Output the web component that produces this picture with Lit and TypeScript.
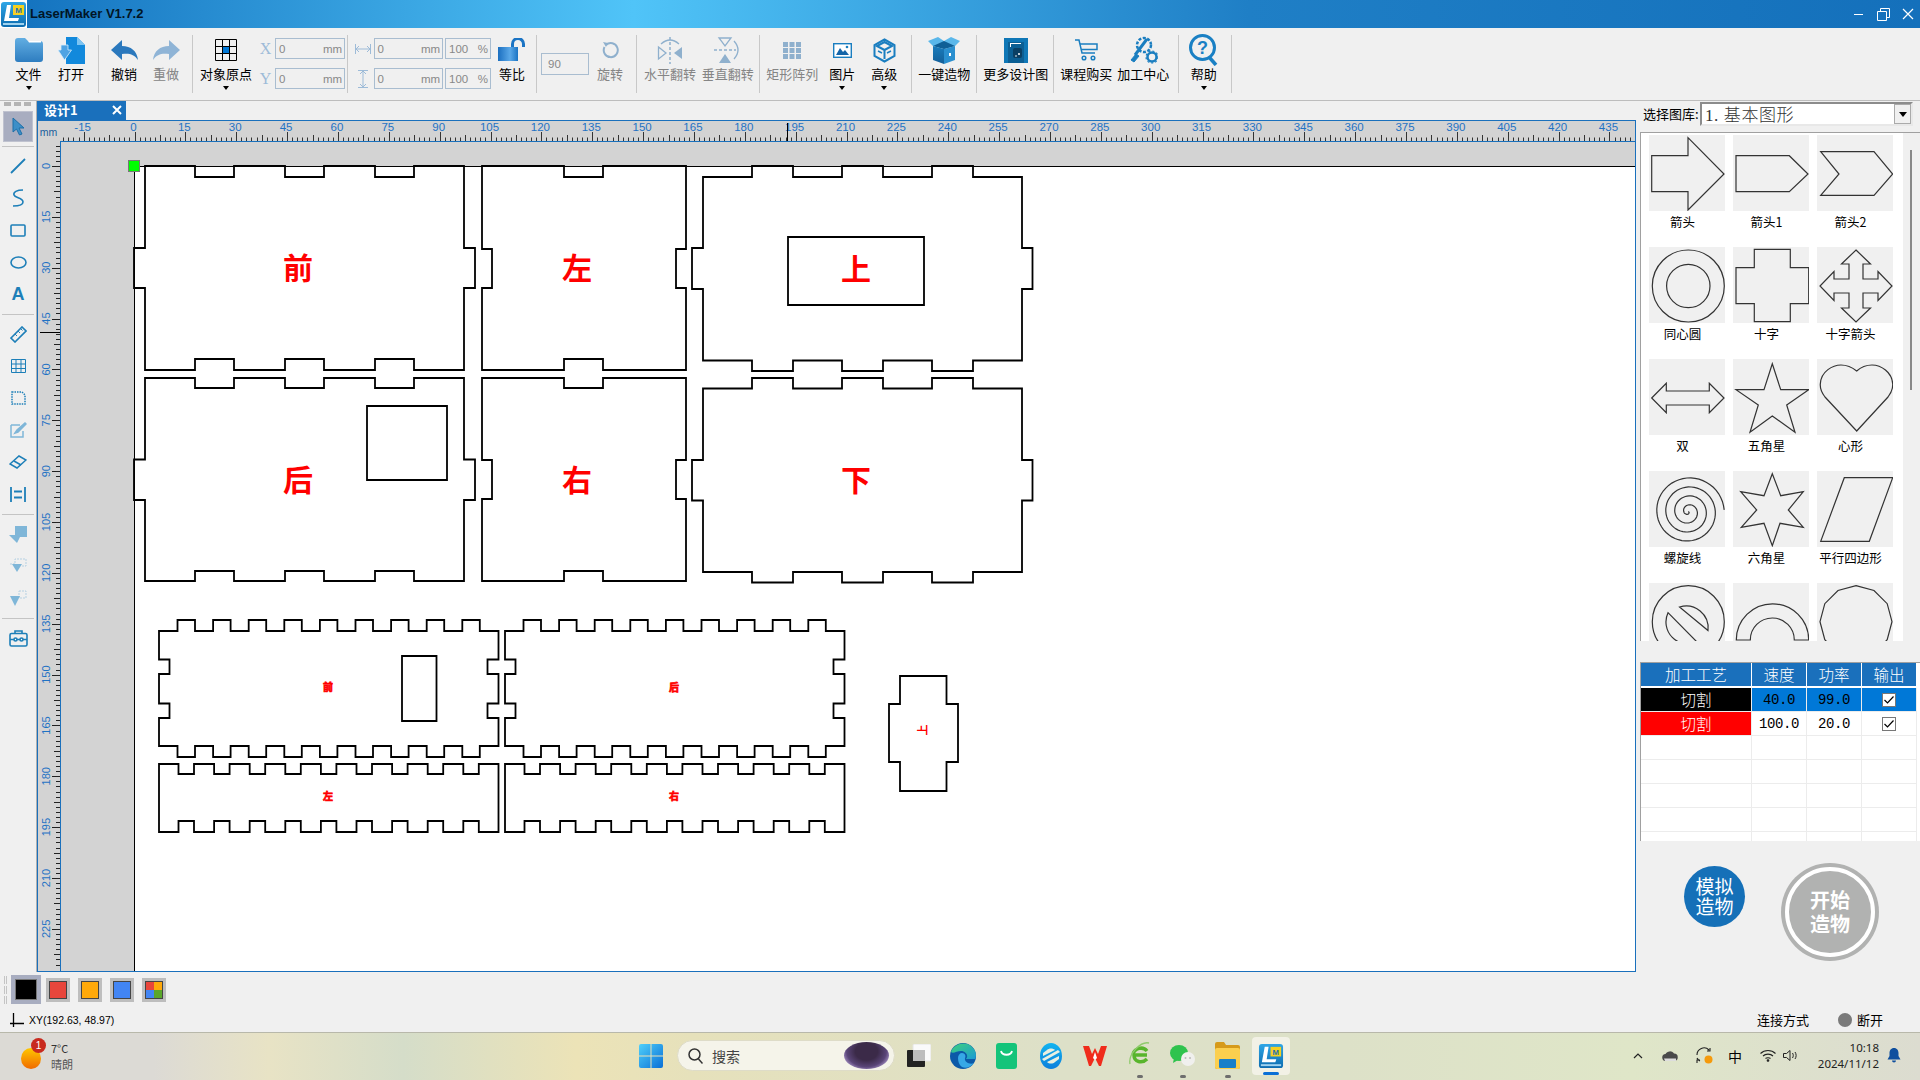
import { LitElement, html, svg, css } from "lit";
import { customElement } from "lit/decorators.js";

type Edge = [number, number, number];
type Features = { top?: Edge[]; right?: Edge[]; bottom?: Edge[]; left?: Edge[] };

// walks a rectangle clockwise, each feature is [from, to, level]
const box = (x0: number, y0: number, x1: number, y1: number, f: Features) => {
  const p: string[] = [`M${x0} ${y0}`];
  for (const [a, b, l] of f.top ?? []) p.push(`L${a} ${y0}L${a} ${l}L${b} ${l}L${b} ${y0}`);
  p.push(`L${x1} ${y0}`);
  for (const [a, b, l] of f.right ?? []) p.push(`L${x1} ${a}L${l} ${a}L${l} ${b}L${x1} ${b}`);
  p.push(`L${x1} ${y1}`);
  for (const [a, b, l] of [...(f.bottom ?? [])].reverse()) p.push(`L${b} ${y1}L${b} ${l}L${a} ${l}L${a} ${y1}`);
  p.push(`L${x0} ${y1}`);
  for (const [a, b, l] of [...(f.left ?? [])].reverse()) p.push(`L${x0} ${b}L${l} ${b}L${l} ${a}L${x0} ${a}`);
  return p.join("") + "Z";
};

const three = (o: number[][], l: number): Edge[] => o.map(([a, b]) => [a, b, l]);
const frontX = [[195, 234], [285, 324], [375, 414]];
const lidX = [[752, 793], [842, 883], [932, 973]];

const longTabs = (dx: number, l: number): Edge[] =>
  Array.from({ length: 9 }, (_, i) => [177.5 + dx + 35.6 * i, 195 + dx + 35.6 * i, l] as Edge);
const longNotches = (dx: number, l: number): Edge[] =>
  Array.from({ length: 9 }, (_, i) => [178.5 + dx + 35.6 * i, 194 + dx + 35.6 * i, l] as Edge);

const longPanel = (dx: number) =>
  box(159 + dx, 631, 498.5 + dx, 746, {
    top: longTabs(dx, 620),
    bottom: longTabs(dx, 757),
    left: [[659.5, 674, 169.5 + dx], [703.5, 718, 169.5 + dx]],
    right: [[659.5, 674, 487.5 + dx], [703.5, 718, 487.5 + dx]],
  });
const lowPanel = (dx: number) =>
  box(159 + dx, 764, 498.5 + dx, 832, { top: longNotches(dx, 774), bottom: longNotches(dx, 821) });

const PANELS = [
  box(145, 166, 464, 370, { top: three(frontX, 177), bottom: three(frontX, 359), left: [[248, 288, 134]], right: [[248, 288, 475]] }),
  box(145, 378, 464, 581, { top: three(frontX, 388), bottom: three(frontX, 571), left: [[459.5, 500, 134]], right: [[459.5, 500, 475]] }),
  box(482, 166, 686, 370, { top: [[564, 603, 177]], bottom: [[564, 603, 359]], left: [[249, 288, 492]], right: [[249, 288, 676]] }),
  box(482, 378, 686, 581, { top: [[564, 603, 388]], bottom: [[564, 603, 571]], left: [[460, 499, 492]], right: [[460, 499, 676]] }),
  box(703, 177, 1022, 360.5, { top: three(lidX, 166), bottom: three(lidX, 371), left: [[248, 289, 692]], right: [[248, 289, 1032.5]] }),
  box(703, 388.5, 1022, 572, { top: three(lidX, 378), bottom: three(lidX, 582.5), left: [[460, 500.5, 692]], right: [[460, 500.5, 1032.5]] }),
  longPanel(0), longPanel(346), lowPanel(0), lowPanel(346),
  box(900, 676, 946.5, 791, { left: [[704, 762, 889]], right: [[704, 762, 958]] }),
  "M367 406H447V480H367Z", "M788 237H924V305H788Z", "M402 656H436.5V721H402Z",
];

const RED = [
  { t: "前", x: 298, y: 268, s: 30 }, { t: "左", x: 577, y: 268, s: 30 },
  { t: "后", x: 298, y: 480, s: 30 }, { t: "右", x: 577, y: 480, s: 30 },
  { t: "上", x: 856, y: 269, s: 30 }, { t: "下", x: 856, y: 480, s: 30 },
];
const TINY = [
  { t: "前", x: 328, y: 687 }, { t: "后", x: 674, y: 687 },
  { t: "左", x: 328, y: 796 }, { t: "右", x: 674, y: 796 },
];

const PX = 50.86 / 15;
const X0 = 134.5;
const Y0 = 166;

const hTicks = () => {
  const out = [];
  for (let i = -14; i <= 296; i++) {
    const x = Math.round(X0 + i * 5.086) + 0.5;
    if (x < 61 || x > 1634) continue;
    const h = i % 10 === 0 ? 9 : i % 5 === 0 ? 6 : 3.5;
    out.push(svg`<line x1=${x} x2=${x} y1=${141 - h} y2="141" stroke="#333"></line>`);
  }
  for (let v = -15; v <= 435; v += 15) {
    out.push(svg`<text class="rl" x=${133.5 + v * PX} y="131" text-anchor="middle">${v}</text>`);
  }
  return out;
};

const vTicks = () => {
  const out = [];
  for (let i = -4; i <= 158; i++) {
    const y = Math.round(Y0 + i * 5.086) + 0.5;
    if (y < 142 || y > 970) continue;
    const w = i % 10 === 0 ? 8 : i % 5 === 0 ? 6 : 4;
    out.push(svg`<line x1=${60 - w} x2="60" y1=${y} y2=${y} stroke="#222"></line>`);
  }
  for (let v = 0; v <= 240; v += 15) {
    const y = Y0 + v * PX;
    if (y > 965) continue;
    out.push(svg`<text class="rl small" transform="translate(50 ${y}) rotate(-90)" text-anchor="middle">${v}</text>`);
  }
  return out;
};

const spiral = () => {
  const pts: string[] = [];
  for (let th = 0; th <= Math.PI * 8; th += 0.12) {
    const r = (9 * th) / (Math.PI * 2);
    pts.push(`${(39.3 + r * Math.cos(th)).toFixed(1)},${(40.7 + r * Math.sin(th)).toFixed(1)}`);
  }
  return pts.join(" ");
};
const dodeca = Array.from({ length: 12 }, (_, i) => {
  const a = (i * Math.PI) / 6;
  return `${(39 + 36 * Math.sin(a)).toFixed(1)},${(38.7 - 36 * Math.cos(a)).toFixed(1)}`;
}).join(" ");

const SHAPES = [
  { n: "箭头", s: svg`<polygon points="2.7,20.7 39,20.7 39,2.7 75,39 39,75 39,56.7 2.7,56.7"/>` },
  { n: "箭头1", s: svg`<polygon points="3,20.7 56.3,20.7 75,39 56.3,56.7 3,56.7"/>` },
  { n: "箭头2", s: svg`<polygon points="3.7,16.7 57,16.7 75.7,39 57,60.3 3.7,60.3 22,39"/>` },
  { n: "同心圆", s: svg`<circle cx="39.3" cy="39" r="36"/><circle cx="39.3" cy="39" r="21.7"/>` },
  { n: "十字", s: svg`<polygon points="21.3,2.3 57.3,2.3 57.3,20.7 75.7,20.7 75.7,56.7 57.3,56.7 57.3,74.7 21.3,74.7 21.3,56.7 3,56.7 3,20.7 21.3,20.7"/>` },
  { n: "十字箭头", s: svg`<polygon points="39,3 53.5,17 46,17 46,32 61,32 61,24.5 75,39 61,53.5 61,46 46,46 46,61 53.5,61 39,75 24.5,61 32,61 32,46 17,46 17,53.5 3,39 17,24.5 17,32 32,32 32,17 24.5,17"/>` },
  { n: "双", s: svg`<polygon points="2.7,39 17.3,24.3 17.3,32 60.3,32 60.3,24.3 75,39 60.3,53.7 60.3,46 17.3,46 17.3,53.7"/>` },
  { n: "五角星", s: svg`<polygon points="39.3,4.7 47.7,30.7 75.7,30.7 53.7,46 62,73.3 39.3,57 17,73.3 25.3,46 3,30.7 31,30.7"/>` },
  { n: "心形", s: svg`<path d="M39.7 72L8 38C4 33 3 29 3.3 25C4 12 16 6 24 6C31 6 36 9 39.7 12C43 9 48 6 55 6C64 6 75 13 75.7 25C76 30 74 34 71 38Z"/>` },
  { n: "螺旋线", s: svg`<polyline points=${spiral()}/>` },
  { n: "六角星", s: svg`<polygon points="39.3,2.7 47.7,24.7 70.3,20.7 55.3,39 70.3,56.3 47,52.3 39.3,74.7 31,52.3 8.3,56.3 23.7,39 7.7,20.7 31,24.7"/>` },
  { n: "平行四边形", s: svg`<polygon points="27.3,6.7 75.7,6.7 52.3,70.3 3.7,70.3"/>` },
  // last row is scrolled off, its captions are below the fold
  { n: "", s: svg`<circle cx="39.3" cy="38.7" r="36"/><path d="M30.5 24A22 22 0 0 1 59 47.5Z"/><path d="M19 29.7L48 59A22 22 0 0 1 19 29.7Z"/>` },
  { n: "", s: svg`<path d="M3.3 57A36 36 0 0 1 75.7 57H61.3A22 22 0 0 0 17.3 57Z"/>` },
  { n: "", s: svg`<polygon points=${dodeca}/>` },
];

const DIM = "#8fb0cd";
const BLUE = "#1a7ec0";

const logo = (size: number) => html`<svg width=${size} height=${size} viewBox="0 0 27 27">
  <defs><linearGradient id="lg" x1="0" y1="0" x2="0" y2="1"><stop offset="0" stop-color="#2fa6e6"/><stop offset="1" stop-color="#0d6cb0"/></linearGradient></defs>
  <rect x="1" y="1" width="25" height="25" rx="3" fill="url(#lg)"/>
  <path d="M7 4h4l-2 13h10l-1 3H4z" fill="#fff"/>
  <rect x="13" y="4" width="11" height="10" fill="#f5d020"/>
  <text x="18.5" y="12" font-size="8" font-weight="700" text-anchor="middle" fill="#1a6fb0" font-family="Liberation Sans">M</text>
  <rect x="3" y="22" width="21" height="2" fill="#9fd2ef"/>
</svg>`;

const I = {
  folder: html`<svg width="28" height="24" viewBox="0 0 28 24"><defs><linearGradient id="f" x1="0" y1="0" x2="0" y2="1"><stop offset="0" stop-color="#62aee2"/><stop offset="1" stop-color="#2e7dc0"/></linearGradient></defs><path d="M0 3q0-3 3-3h7l3 3h12q3 0 3 3v15q0 3-3 3H3q-3 0-3-3z" fill="url(#f)"/><path d="M13 3h13v1.5H14z" fill="#fff"/></svg>`,
  open: html`<svg width="27" height="27" viewBox="0 0 27 27"><path d="M8 0h11l8 8v19H8z" fill="#1289dc"/><path d="M19 0l8 8h-8z" fill="#7cc4f2"/><path d="M3 13V8h7v5h3.5L6.5 23 0 13z" fill="#4fa3e3" stroke="#d8ecfa" stroke-width=".8"/></svg>`,
  undo: html`<svg width="27" height="22" viewBox="0 0 27 22"><path d="M11 1L0 11l11 10v-6c7-1 12 0 16 6-1-9-7-14-16-14z" fill="#2a78bd"/></svg>`,
  redo: html`<svg width="27" height="22" viewBox="0 0 27 22"><path d="M16 1l11 10-11 10v-6C9 14 4 15 0 21 1 12 7 7 16 7z" fill="#8fb4d6"/></svg>`,
  grid: html`<svg width="22" height="22" viewBox="0 0 22 22"><rect x="7.5" y="7.5" width="7" height="7" fill="#0078d7"/><path d="M.5.5h21v21H.5zM7.5.5v21M14.5.5v21M.5 7.5h21M.5 14.5h21" fill="none" stroke="#000"/></svg>`,
  lock: html`<svg width="29" height="24" viewBox="0 0 29 24"><defs><linearGradient id="lk" x1="0" y1="0" x2="1" y2="0"><stop offset="0" stop-color="#1b6fc0"/><stop offset=".6" stop-color="#5aa8e8"/><stop offset="1" stop-color="#1b74c4"/></linearGradient></defs><rect x="0" y="9" width="20" height="14" fill="url(#lk)"/><path d="M14.5 9V6a5.5 5.5 0 0 1 11 0v3" fill="none" stroke="#1b74c4" stroke-width="3"/></svg>`,
  rotate: html`<svg width="18" height="18" viewBox="0 0 18 18"><path d="M5 4a7 7 0 1 1-1.5 2" fill="none" stroke=${DIM} stroke-width="2"/><path d="M2 1l5 1-2 4z" fill=${DIM}/></svg>`,
  flipH: html`<svg width="26" height="28" viewBox="0 0 26 28"><path d="M13 1v27" stroke=${DIM} stroke-width="1.5" stroke-dasharray="3 2"/><path d="M1.5 11l7.5 6-7.5 6z" fill="none" stroke=${DIM} stroke-width="1.3"/><path d="M25 11l-8 6 8 6z" fill=${DIM}/><path d="M4 8q9-8 18 0" fill="none" stroke=${DIM} stroke-width="1.3"/></svg>`,
  flipV: html`<svg width="27" height="28" viewBox="0 0 27 28"><path d="M0 14h22" stroke=${DIM} stroke-width="1.5" stroke-dasharray="3 2"/><path d="M5 2h12l-6 8z" fill="none" stroke=${DIM} stroke-width="1.3"/><path d="M5 27h12l-6-9z" fill=${DIM}/><path d="M20 5q8 9 0 18" fill="none" stroke=${DIM} stroke-width="1.3"/></svg>`,
  array: html`<svg width="18" height="17" viewBox="0 0 18 17" fill=${DIM}><rect width="5" height="5"/><rect x="6.5" width="5" height="5"/><rect x="13" width="5" height="5"/><rect y="6" width="5" height="5"/><rect x="6.5" y="6" width="5" height="5"/><rect x="13" y="6" width="5" height="5"/><rect y="12" width="5" height="5"/><rect x="6.5" y="12" width="5" height="5"/><rect x="13" y="12" width="5" height="5"/></svg>`,
  pic: html`<svg width="19" height="15" viewBox="0 0 19 15"><rect x=".7" y=".7" width="17.6" height="13.6" fill="#fff" stroke=${BLUE} stroke-width="1.4"/><path d="M3 12l4-7 3 4 2-2 4 5z" fill="#1565a8"/><circle cx="14" cy="4" r="1.3" fill=${BLUE}/></svg>`,
  cube: html`<svg width="23" height="25" viewBox="0 0 23 25" fill="none" stroke=${BLUE} stroke-width="2"><path d="M11.5 1.5l10 5.5v11l-10 5.5-10-5.5V7z"/><path d="M4 8l7.5 4 7.5-4-7.5-4zM11.5 12v9"/><path d="M5 13l4 2M14 15l4-2" stroke-width="1.5"/></svg>`,
  box: html`<svg width="32" height="27" viewBox="0 0 32 27"><defs><linearGradient id="bx" x1="0" y1="0" x2="0" y2="1"><stop offset="0" stop-color="#1a7cbc"/><stop offset="1" stop-color="#135f99"/></linearGradient></defs><path d="M5 9l11 3v15L5 23z" fill="url(#bx)"/><path d="M27 9l-11 3v15l11-4z" fill="#2a8fcf"/><path d="M5 9L0 4l10-4 6 4 7-4 9 4-5 5-11 3z" fill="#5ab7ea"/><path d="M5 9l11-5 11 5-11 3z" fill="#0f5f96"/><path d="M21 19v-3h2v3z" fill="#fff"/></svg>`,
  more: html`<svg width="24" height="25" viewBox="0 0 24 25"><rect width="24" height="25" fill="#0f77b6"/><path d="M4 4h16v21H4z" fill="#0b5f94"/><path d="M6 5h11v1H6zM6 5h1v4H6z" fill="#fff"/><rect x="9" y="10" width="9" height="10" rx="2" fill="#0a3f63"/><circle cx="15" cy="16" r="1" fill="#fff"/><circle cx="12" cy="18" r=".8" fill="#fff"/></svg>`,
  cart: html`<svg width="23" height="22" viewBox="0 0 23 22" fill="none" stroke=${BLUE} stroke-width="1.5"><path d="M0 1h4l3 13h13"/><path d="M5 5h17v5.5H6.5"/><circle cx="9" cy="19" r="1.8"/><circle cx="18" cy="19" r="1.8"/></svg>`,
  gear: html`<svg width="29" height="28" viewBox="0 0 29 28" fill="none" stroke=${BLUE}><circle cx="15" cy="9" r="7" stroke-width="2.5" stroke-dasharray="3 1.5"/><path d="M18 3L6 19" stroke-width="3"/><path d="M2 24l5-6 3 2-5 6z" fill=${BLUE} stroke-width="1"/><circle cx="23" cy="21" r="4.5" stroke-width="2.5"/><circle cx="23" cy="21" r="6" stroke-width="1.2" stroke-dasharray="2 2"/></svg>`,
  help: html`<svg width="29" height="32" viewBox="0 0 29 32" fill="none"><circle cx="13.5" cy="13.5" r="12" stroke="#1a80c4" stroke-width="3"/><path d="M20 23l7 8" stroke="#1a80c4" stroke-width="3.5"/><text x="13.5" y="20" text-anchor="middle" font-size="18" font-weight="700" fill="#1a80c4" font-family="Liberation Sans">?</text></svg>`,
  hArrow: html`<svg width="16" height="12" viewBox="0 0 16 12" fill="none" stroke="#9dbbd8"><path d="M.5 1v10M15.5 1v10M1 6h14M4 3L1 6l3 3M12 3l3 3-3 3"/></svg>`,
  vArrow: html`<svg width="12" height="18" viewBox="0 0 12 18" fill="none" stroke="#9dbbd8"><path d="M1 .5h10M1 17.5h10M6 1v16M3 4l3-3 3 3M3 14l3 3 3-3"/></svg>`,
};

type Tool = { ml: number; label?: string; icon?: unknown; dim?: boolean; arrow?: boolean; sep?: boolean; block?: "xy" | "wh" | "angle" };

const TOOLS: Tool[] = [
  { ml: 0, label: "文件", icon: I.folder, arrow: true },
  { ml: 16.5, label: "打开", icon: I.open },
  { ml: 13.5, sep: true },
  { ml: 12.5, label: "撤销", icon: I.undo },
  { ml: 16, label: "重做", icon: I.redo, dim: true },
  { ml: 13, sep: true },
  { ml: 7, label: "对象原点", icon: I.grid, arrow: true },
  { ml: 6, block: "xy" },
  { ml: 2, sep: true },
  { ml: 7, block: "wh" },
  { ml: 8, label: "等比", icon: I.lock },
  { ml: 10.5, sep: true },
  { ml: 4.5, block: "angle" },
  { ml: 8, label: "旋转", icon: I.rotate, dim: true },
  { ml: 13, sep: true },
  { ml: 7, label: "水平翻转", icon: I.flipH, dim: true },
  { ml: 5.5, label: "垂直翻转", icon: I.flipV, dim: true },
  { ml: 5.5, sep: true },
  { ml: 6, label: "矩形阵列", icon: I.array, dim: true },
  { ml: 11, label: "图片", icon: I.pic, arrow: true },
  { ml: 16, label: "高级", icon: I.cube, arrow: true },
  { ml: 13.5, sep: true },
  { ml: 6.5, label: "一键造物", icon: I.box },
  { ml: 5.5, sep: true },
  { ml: 6.5, label: "更多设计图", icon: I.more },
  { ml: 4.5, sep: true },
  { ml: 6.5, label: "课程购买", icon: I.cart },
  { ml: 5, label: "加工中心", icon: I.gear },
  { ml: 8.5, sep: true },
  { ml: 12, label: "帮助", icon: I.help, arrow: true },
  { ml: 14, sep: true },
];

const T = "#1d7fb8";
const LIGHT = "#7fb6d8";
const SIDE_GROUPS = [
  [
    html`<svg width="16" height="16" viewBox="0 0 16 16"><path d="M1 15L15 1" stroke=${T} stroke-width="1.8"/></svg>`,
    html`<svg width="14" height="18" viewBox="0 0 14 18" fill="none"><path d="M12 1C6 1 2 3 3 6c1 3 9 3 9 7 0 3-5 4-10 4" stroke=${T} stroke-width="1.6"/></svg>`,
    html`<svg width="16" height="13" viewBox="0 0 16 13"><rect x="1" y="1" width="14" height="11" rx="1" fill="none" stroke=${T} stroke-width="1.6"/></svg>`,
    html`<svg width="17" height="13" viewBox="0 0 17 13"><ellipse cx="8.5" cy="6.5" rx="7.5" ry="5.5" fill="none" stroke=${T} stroke-width="1.6"/></svg>`,
    html`<span class="a-glyph">A</span>`,
  ],
  [
    html`<svg width="17" height="17" viewBox="0 0 17 17" fill="none"><path d="M1 12L12 1l4 4L5 16z" stroke=${T} stroke-width="1.6"/><path d="M5 8l2 2M8 5l2 2M11 3l1.5 1.5" stroke=${T}/></svg>`,
    html`<svg width="15" height="14" viewBox="0 0 15 14" fill="none" stroke=${T}><path d="M.5.5h14v13H.5zM5 .5v13M10 .5v13M.5 5h14M.5 9.5h14"/></svg>`,
    html`<svg width="15" height="14" viewBox="0 0 15 14" fill="none"><path d="M1 1h10l3 3v9H1z" stroke=${T} stroke-width="1.5" stroke-dasharray="1.5 1"/></svg>`,
    html`<svg width="17" height="16" viewBox="0 0 17 16" fill="none" stroke=${LIGHT} stroke-width="1.5"><path d="M1 3h9M1 3v12h12V9"/><path d="M5 11l2-3 8-7 1 1-8 8z" fill=${LIGHT}/></svg>`,
    html`<svg width="18" height="14" viewBox="0 0 18 14" fill="none" stroke=${T} stroke-width="1.5"><path d="M1 9l9-8 7 4-9 8z"/><path d="M5 6l7 4"/></svg>`,
    html`<svg width="16" height="15" viewBox="0 0 16 15" fill="none" stroke=${T} stroke-width="1.8"><path d="M1 0v15M15 0v15M4 4.5h8M4 10.5h8"/></svg>`,
  ],
  [
    html`<svg width="18" height="17" viewBox="0 0 18 17"><path d="M6 0h12v11H11l-3 6-8-8h6z" fill=${LIGHT}/></svg>`,
    html`<svg width="18" height="17" viewBox="0 0 18 17" fill="none"><path d="M1 6h5V1h11v7h-5" stroke="#b5d0e2" stroke-dasharray="2 1"/><path d="M3 6h10l-5 8z" fill=${LIGHT}/></svg>`,
    html`<svg width="18" height="17" viewBox="0 0 18 17" fill="none"><path d="M10 1h7v7h-7z" stroke="#b5d0e2" stroke-dasharray="2 1"/><path d="M1 6h10l-5 10z" fill=${LIGHT}/></svg>`,
  ],
  [
    html`<svg width="19" height="17" viewBox="0 0 19 17" fill="none" stroke=${T} stroke-width="1.6"><rect x="1" y="3.5" width="17" height="12.5" rx="1.5"/><path d="M6 3.5V1h7v2.5M1 9.5h17"/><circle cx="6.5" cy="9.5" r="1.5" fill="#fff"/><circle cx="12.5" cy="9.5" r="1.5" fill="#fff"/></svg>`,
  ],
];

const SWATCHES = ["#e8463c", "#ffa90a", "#4285f4"];

type Bar = { ml: number; w: number; dot?: boolean; icon: unknown };

const CENTER_ICONS: Bar[] = [
  { ml: 12, w: 24, icon: html`<svg width="24" height="23" viewBox="0 0 24 23"><rect x="6" y="0" width="18" height="17" rx="1.5" fill="#fafafa" stroke="#e4e4e4"/><rect x="0" y="6" width="18" height="17" rx="1" fill="#222"/><rect x="6" y="6" width="12" height="11" fill="#bdbdbd"/></svg>` },
  { ml: 19, w: 26, icon: html`<svg width="26" height="26" viewBox="0 0 26 26"><defs><linearGradient id="ed" x1="0" y1="0" x2="1" y2="1"><stop offset="0" stop-color="#3fd27a"/><stop offset="1" stop-color="#1a9ad6"/></linearGradient></defs><circle cx="13" cy="13" r="13" fill="#0c59a8"/><path d="M1 9C4 1 14-2 21 3c5 4 6 9 4 13h-9c3-3 0-8-5-8-4 0-8 3-10 1z" fill="url(#ed)"/><path d="M8 15c0-3 2-5 4-5 3 0 4 3 3 5-1 4 5 7 9 5-3 4-8 6-12 4-3-2-4-6-4-9z" fill="#36a8e6"/></svg>` },
  { ml: 20, w: 21, icon: html`<svg width="21" height="26" viewBox="0 0 21 26"><rect width="21" height="26" rx="3" fill="#14c47a"/><path d="M5 8c1 5 10 5 11 0" fill="none" stroke="#fff" stroke-width="1.8"/></svg>` },
  { ml: 23, w: 22, icon: html`<svg width="22" height="26" viewBox="0 0 22 26"><defs><linearGradient id="se" x1="0" y1="0" x2="0" y2="1"><stop offset="0" stop-color="#12b4f0"/><stop offset="1" stop-color="#0c7fdc"/></linearGradient></defs><ellipse cx="11" cy="13" rx="11" ry="13" fill="url(#se)"/><path d="M3 13L15 7c-2-2-6-2-8 0L3 10zM19 13L7 19c2 2 6 2 8 0l4-3z" fill="#e9efe0"/><path d="M2 16l16-9 2 2L4 18z" fill="#e9efe0"/></svg>` },
  { ml: 21, w: 24, icon: html`<svg width="24" height="20" viewBox="0 0 24 20"><path d="M0 0h6l3 8 3-6 3 6 3-8h6l-6 20h-2l-4-8-4 8H6z" fill="#f02c1c"/><path d="M12 6l2 6-2 2-2-2z" fill="#fff"/></svg>` },
  { ml: 22, w: 21, dot: true, icon: html`<svg width="21" height="27" viewBox="0 0 21 27" fill="none"><path d="M18 13H5c0 7 8 9 13 4" stroke="#58b52c" stroke-width="3.5"/><path d="M4 12c2-6 10-8 14-3" stroke="#58b52c" stroke-width="3.5"/><path d="M1 22C-1 12 12-1 20 1" stroke="#8fca6c" stroke-width="1.3"/></svg>` },
  { ml: 20, w: 25, dot: true, icon: html`<svg width="25" height="22" viewBox="0 0 25 22"><ellipse cx="9" cy="8" rx="9" ry="8" fill="#2fc34e"/><path d="M4 13l-1 5 5-3z" fill="#2fc34e"/><ellipse cx="18" cy="14" rx="7" ry="7" fill="#f0f0ee"/><circle cx="15.5" cy="13" r="1" fill="#bbb"/><circle cx="20" cy="13" r="1" fill="#bbb"/></svg>` },
  { ml: 20, w: 25, dot: true, icon: html`<svg width="25" height="27" viewBox="0 0 25 27"><path d="M0 2q0-2 2-2h7l2 3h12q2 0 2 2v20q0 2-2 2H2q-2 0-2-2z" fill="#d69a1a"/><rect x="0" y="6" width="25" height="21" rx="2" fill="#fbcf4e"/><rect x="4" y="17" width="17" height="9" rx="1" fill="#1a80c8"/></svg>` },
];

@customElement("app-root")
export class AppRoot extends LitElement {
  static styles = css`
    :host {
      display: block;
      width: 1920px;
      height: 1080px;
      overflow: hidden;
      background: #f0f0f0;
      font-family: "Noto Sans CJK SC", "Liberation Sans", sans-serif;
      font-size: 13px;
      color: #000;
    }

    .title {
      height: 28px;
      display: flex;
      align-items: center;
      background: linear-gradient(90deg, #1270bd 0, #50c4f8 33%, #1f7fc6 65%, #1470bb 100%);
    }
    .logo {
      width: 27px;
      height: 28px;
      background: #fff;
      display: flex;
      align-items: center;
      justify-content: center;
    }
    .title b {
      margin: 0 0 2px 3px;
      font: 700 13px "Liberation Sans", sans-serif;
      color: #011526;
    }
    .win {
      margin-left: auto;
      margin-right: 6px;
      display: flex;
      gap: 12.5px;
      align-items: center;
    }

    .toolbar {
      height: 73px;
      box-sizing: border-box;
      border-bottom: 1px solid #bdbdbd;
      display: flex;
      padding-left: 15.5px;
    }
    .tool {
      display: flex;
      flex-direction: column;
      align-items: center;
      white-space: nowrap;
    }
    .tool .ic {
      width: 0;
      height: 34px;
      margin-top: 5px;
      display: flex;
      align-items: center;
      justify-content: center;
    }
    .tool .ic svg {
      flex: none;
    }
    .tool .lb {
      height: 18px;
      line-height: 18px;
      margin-top: -2px;
    }
    .tool.dim .lb {
      color: #858585;
    }
    .tool .ar {
      margin-top: 3px;
      border: 3px solid transparent;
      border-top: 4px solid #000;
      border-bottom: 0;
    }
    .sep {
      width: 1px;
      height: 58px;
      margin-top: 7px;
      background: #c8c8c8;
    }
    .block {
      display: grid;
      gap: 9px 2px;
      margin-top: 10px;
      align-content: start;
    }
    .block.xy {
      grid-template-columns: 15px 70px;
    }
    .block.wh {
      grid-template-columns: 16.5px 69.5px 46px;
    }
    .block.angle {
      width: 48px;
      margin-top: 25px;
    }
    .mark {
      display: flex;
      align-items: center;
      justify-content: center;
      font: 16px "Liberation Serif", serif;
      color: #9dbbd8;
    }
    .inp {
      height: 21px;
      box-sizing: border-box;
      border: 1px solid #a9bdd0;
      display: flex;
      justify-content: space-between;
      align-items: center;
      padding: 0 2px 0 3px;
      font: 11.5px "Liberation Sans", sans-serif;
      color: #888;
    }
    .block.angle .inp {
      height: 22px;
      padding-left: 6px;
    }

    .main {
      display: flex;
      height: 871px;
    }
    .side {
      width: 36px;
      flex: none;
      border-right: 1px solid #b0b0b0;
      display: flex;
      flex-direction: column;
      align-items: center;
    }
    .grip {
      width: 28px;
      height: 3px;
      margin-top: 1px;
      background: repeating-linear-gradient(90deg, #b4b4b4 0 7px, transparent 7px 10px);
      border-bottom: 1px solid transparent;
    }
    .pick {
      width: 30px;
      height: 31px;
      margin-top: 5px;
      background: #a8adc0;
      border: 1px solid #bfc2cf;
      box-sizing: border-box;
      display: flex;
      align-items: center;
      justify-content: center;
    }
    .side hr {
      width: 32px;
      height: 1px;
      margin: 4px 0 3px;
      border: 0;
      background: #c4c4c4;
    }
    .st {
      width: 100%;
      height: 32px;
      flex: none;
      display: flex;
      align-items: center;
      justify-content: center;
    }
    .a-glyph {
      font: 700 18px "Liberation Sans", sans-serif;
      color: #1d7fb8;
    }

    .work {
      width: 1599px;
      flex: none;
      display: flex;
      flex-direction: column;
    }
    .tabs {
      height: 19px;
      display: flex;
    }
    .tab {
      width: 89px;
      box-sizing: border-box;
      padding: 0 4px 2px 7px;
      background: #1a70bc;
      color: #fff;
      display: flex;
      align-items: center;
      justify-content: space-between;
      font-weight: 700;
      font-size: 13px;
    }
    .frame {
      height: 852px;
      box-sizing: border-box;
      border: 1px solid #1a70bc;
    }
    .frame svg {
      display: block;
    }
    .rl {
      font: 11.5px "Liberation Sans", sans-serif;
      fill: #1f72c4;
    }
    .rl.small {
      font-size: 11px;
    }
    .mm {
      font: 10.5px "Liberation Sans", sans-serif;
      fill: #1a5f9c;
    }
    .red {
      font-family: "Noto Sans CJK SC", sans-serif;
      font-weight: 700;
      fill: #f00;
    }
    .red.tiny {
      stroke: #f00;
      stroke-width: 0.7;
    }

    .panel {
      flex: 1;
      display: flex;
      flex-direction: column;
    }
    .libs {
      height: 24px;
      margin-top: 1px;
      padding-left: 7px;
      display: flex;
      align-items: center;
    }
    .libs .name {
      width: 57px;
      padding-bottom: 1px;
    }
    .combo {
      width: 213px;
      height: 24px;
      box-sizing: border-box;
      background: #fff;
      border: 2px solid;
      border-color: #8c8c8c #e8e8e8 #e8e8e8 #8c8c8c;
      display: flex;
      align-items: center;
      padding: 0 0 2px 3px;
      font: 17px "Liberation Serif", "Noto Sans CJK SC", serif;
      font-weight: 300;
      letter-spacing: 0.6px;
      color: #333;
    }
    .combo i {
      margin: 2px 0 0 auto;
      width: 17px;
      height: 20px;
      box-sizing: border-box;
      background: #f0f0f0;
      border: 1px solid #aaa;
      display: flex;
      align-items: center;
      justify-content: center;
    }
    .combo i::after {
      content: "";
      border: 4px solid transparent;
      border-top: 5px solid #000;
      border-bottom: 0;
    }
    .gallery {
      height: 509px;
      margin: 6px 0 21px 4px;
      box-sizing: border-box;
      border-left: 1px solid #a0a0a0;
      border-top: 1px solid #a0a0a0;
      display: flex;
      overflow: hidden;
      background: #fff;
    }
    .cells {
      width: 262px;
      box-sizing: border-box;
      padding: 2px 0 0 8px;
      display: grid;
      grid-template-columns: repeat(3, 76px);
      column-gap: 8px;
      grid-auto-rows: 112px;
    }
    .cell svg {
      display: block;
      background: #f0f0f0;
      fill: none;
      stroke: #333;
      stroke-width: 1.2;
    }
    .cell span {
      display: block;
      width: 67px;
      text-align: center;
      margin-top: 2px;
      line-height: 18px;
      font-size: 12.5px;
      white-space: nowrap;
    }
    .scroll {
      flex: 1;
      background: #f0f0f0;
      position: relative;
    }
    .scroll::after {
      content: "";
      position: absolute;
      left: 7px;
      top: 17px;
      width: 2px;
      height: 240px;
      background: #888;
    }

    .table {
      height: 179px;
      margin-left: 4px;
      box-sizing: border-box;
      border-left: 1px solid #a0a0a0;
      border-top: 1px solid #a0a0a0;
      overflow: hidden;
      background: #fff;
    }
    .head,
    .rows {
      display: grid;
      grid-template-columns: 110px 54px 54px 54px;
      column-gap: 1px;
    }
    .head {
      grid-auto-rows: 23px;
      margin-bottom: 2px;
      width: 275px;
      font-size: 15.5px;
      font-weight: 300;
      color: #fff;
    }
    .head div {
      background: #1a70bc;
      text-align: center;
      line-height: 23px;
    }
    .rows {
      width: 275px;
      grid-auto-rows: 23px;
      row-gap: 1px;
      background: #ececec;
      border-right: 1px solid #ececec;
    }
    .rows div {
      background: #fff;
      display: flex;
      align-items: center;
      justify-content: center;
      font: 14px "Liberation Mono", monospace;
      letter-spacing: -0.4px;
    }
    .rows .cut {
      font: 300 15.5px/19px "Noto Sans CJK SC", sans-serif;
      letter-spacing: 0;
      color: #fff;
      padding-bottom: 1px;
    }
    .rows .k {
      background: #000;
    }
    .rows .r {
      background: #f00;
    }
    .rows .sel {
      background: #0078d7;
    }
    .check {
      width: 14px;
      height: 14px;
      box-sizing: border-box;
      background: #fff;
      border: 1px solid #777;
      display: flex;
      align-items: center;
      justify-content: center;
    }

    .go {
      display: flex;
      align-items: flex-start;
      padding: 22px 0 0 48px;
      gap: 36px;
    }
    .sim,
    .start {
      border-radius: 50%;
      display: flex;
      align-items: center;
      justify-content: center;
      text-align: center;
      color: #fff;
      box-sizing: border-box;
    }
    .sim {
      width: 61px;
      height: 61px;
      margin-top: 3px;
      padding-bottom: 2px;
      background: #1570b8;
      font-size: 19px;
      line-height: 20px;
    }
    .start {
      width: 98px;
      height: 98px;
      background: #b1b2b1;
      font-size: 20px;
      line-height: 24px;
      font-weight: 700;
      position: relative;
    }
    .start::before {
      content: "";
      position: absolute;
      inset: 4px;
      border-radius: 50%;
      border: 4px solid #fff;
    }

    .colors {
      height: 37px;
      display: flex;
      align-items: center;
      padding: 0 0 2px 4px;
      box-sizing: border-box;
    }
    .dots {
      width: 3px;
      height: 28px;
      margin-right: 4px;
      background: repeating-linear-gradient(180deg, #c4c4c4 0 8px, transparent 8px 10px);
      position: relative;
    }
    .dots::after {
      content: "";
      position: absolute;
      inset: 0 1px;
      background: #f0f0f0;
    }
    .sw {
      width: 24px;
      height: 24px;
      box-sizing: border-box;
      border: 3px solid #bdbdbd;
      margin-right: 8px;
      display: flex;
    }
    .sw i {
      flex: 1;
      border: 1px solid #444;
    }
    .sw.on {
      width: 30px;
      height: 29px;
      margin-right: 5px;
      border: 4px solid #a8adc0;
      padding: 0;
    }
    .sw.on i {
      background: #000;
      border: 1px solid #777;
    }
    .sw .multi {
      background: conic-gradient(#ffa90a 0 25%, #5aa62a 25% 50%, #4285f4 50% 75%, #e8463c 75%);
    }

    .status {
      height: 23px;
      box-sizing: border-box;
      display: flex;
      align-items: center;
      padding: 0 37px 2px 10px;
      font-size: 13px;
    }
    .status .xy {
      margin-left: 5px;
      font: 10.5px "Liberation Sans", sans-serif;
    }
    .status .conn {
      margin-left: auto;
    }
    .status .dot {
      width: 14px;
      height: 14px;
      margin: 0 5px 0 29px;
      border-radius: 50%;
      background: #7a7a7a;
    }

    .task {
      height: 48px;
      box-sizing: border-box;
      border-top: 1px solid #b8b8aa;
      padding-bottom: 2px;
      display: flex;
      align-items: center;
      background: linear-gradient(90deg, #dcdad5 0, #dcdad5 8%, #e8e3c5 14%, #d5ddc9 21%, #ece3b7 30%, #e6e1bb 36%, #dde0c8 55%, #dde1c8 70%, #dfe6c8 85%, #dcdcd0 100%);
    }
    .weather {
      width: 53px;
      margin-left: 21px;
      height: 100%;
      display: flex;
      align-items: center;
      position: relative;
      flex: none;
    }
    .sun {
      width: 20px;
      height: 21px;
      margin-top: 6px;
      border-radius: 50%;
      background: linear-gradient(#ffc800, #f06a00);
    }
    .badge {
      position: absolute;
      left: 10px;
      top: 5px;
      width: 15px;
      height: 15px;
      border-radius: 50%;
      background: #c82a1e;
      color: #fff;
      font: 10px/15px "Liberation Sans", sans-serif;
      text-align: center;
    }
    .wtxt {
      margin-left: 10px;
      font-size: 11px;
      line-height: 16px;
      color: #333;
      white-space: nowrap;
    }
    .wtxt span {
      color: #555;
    }
    .bar-left {
      margin-left: 565px;
      display: flex;
      align-items: center;
      flex: none;
    }
    .win11 {
      width: 24px;
      height: 24px;
      flex: none;
    }
    .ti {
      position: relative;
      display: flex;
      align-items: center;
      justify-content: center;
      flex: none;
      height: 40px;
    }
    .ti.dot::after {
      content: "";
      position: absolute;
      left: 50%;
      bottom: -2px;
      margin-left: -3px;
      width: 6px;
      height: 3px;
      border-radius: 2px;
      background: #6e6e6e;
    }
    .search {
      width: 218px;
      height: 31px;
      margin-left: 14px;
      box-sizing: border-box;
      padding-left: 10px;
      border-radius: 16px;
      background: #f5f4ea;
      border: 1px solid #dedcc8;
      display: flex;
      align-items: center;
      flex: none;
      font-size: 14px;
      color: #444;
      overflow: hidden;
    }
    .search em {
      margin-left: 9px;
      font-style: normal;
    }
    .search i {
      margin-left: auto;
      margin-right: 5px;
      width: 45px;
      height: 27px;
      border-radius: 50%;
      background: radial-gradient(ellipse at 50% 35%, #3b2a48 35%, #5a4578 62%, #a18cc0 78%, #e4e0d0 100%);
    }
    .cur {
      width: 38px;
      height: 38px;
      margin-left: 12px;
      border-radius: 4px;
      background: #f2f1e6;
      position: relative;
      display: flex;
      align-items: center;
      justify-content: center;
      flex: none;
    }
    .cur::after {
      content: "";
      position: absolute;
      left: 11px;
      bottom: 0;
      width: 16px;
      height: 3px;
      border-radius: 2px;
      background: #0a6fd6;
    }
    .tray {
      margin-left: 343px;
      display: flex;
      align-items: center;
      position: relative;
      height: 100%;
      flex: none;
    }
    .tray svg {
      flex: none;
    }
    .zh {
      margin-left: 15px;
      font-size: 14px;
    }
    .clock {
      width: 62px;
      margin-left: 18px;
      text-align: right;
      font: 11.5px/16px "Noto Sans", "Liberation Sans", sans-serif;
      color: #222;
    }
    .bell {
      margin-left: 8px;
    }
  `;

  private renderTool(t: Tool) {
    const ml = `margin-left:${t.ml}px`;
    if (t.sep) return html`<div class="sep" style=${ml}></div>`;
    if (t.block === "xy")
      return html`<div class="block xy" style=${ml}>
        <div class="mark">X</div><div class="inp"><span>0</span><span>mm</span></div>
        <div class="mark">Y</div><div class="inp"><span>0</span><span>mm</span></div>
      </div>`;
    if (t.block === "wh")
      return html`<div class="block wh" style=${ml}>
        <div class="mark">${I.hArrow}</div><div class="inp"><span>0</span><span>mm</span></div><div class="inp"><span>100</span><span>%</span></div>
        <div class="mark">${I.vArrow}</div><div class="inp"><span>0</span><span>mm</span></div><div class="inp"><span>100</span><span>%</span></div>
      </div>`;
    if (t.block === "angle")
      return html`<div class="block angle" style=${ml}><div class="inp"><span>90</span></div></div>`;
    return html`<div class="tool ${t.dim ? "dim" : ""}" style=${ml}>
      <div class="ic">${t.icon}</div>
      <div class="lb">${t.label}</div>
      ${t.arrow ? html`<div class="ar"></div>` : null}
    </div>`;
  }

  private renderCanvas() {
    return html`<svg width="1597" height="850" viewBox="38 121 1597 850">
      <rect x="38" y="121" width="1597" height="850" fill="#d3d3d3"></rect>
      <rect x="135" y="166" width="1500" height="805" fill="#fff"></rect>
      <path d="M134.5 971V166.5H1635" fill="none" stroke="#000"></path>
      <path d="M61 141.5H1635M60.5 141V971" fill="none" stroke="#1a70bc"></path>
      <text class="mm" x="48.5" y="136" text-anchor="middle">mm</text>
      ${hTicks()} ${vTicks()}
      <path d="M787.5 123V141M40 332.5H60" stroke="#000"></path>
      <g fill="none" stroke="#000" stroke-width="1.8">
        ${PANELS.map((d) => svg`<path d=${d}></path>`)}
      </g>
      ${RED.map(
        (r) => svg`<text class="red" x=${r.x} y=${r.y + r.s * 0.37} font-size=${r.s} text-anchor="middle">${r.t}</text>`,
      )}
      ${TINY.map(
        (r) => svg`<text class="red tiny" x=${r.x} y=${r.y + 4} font-size="10" text-anchor="middle">${r.t}</text>`,
      )}
      <text class="red" transform="translate(923 730) rotate(-90)" y="4" font-size="11" text-anchor="middle">上</text>
      <rect x="128.5" y="160.5" width="11" height="11" fill="#0f0" stroke="#777"></rect>
    </svg>`;
  }

  render() {
    return html`
      <div class="title">
        <div class="logo">${logo(27)}</div>
        <b>LaserMaker V1.7.2</b>
        <div class="win">
          <svg width="10" height="10" viewBox="0 0 10 10"><path d="M0 5.5h9" stroke="#fff"/></svg>
          <svg width="13" height="13" viewBox="0 0 13 13" fill="none" stroke="#fff"><path d="M.5 3.5h9v9h-9zM3.5 3V.5h9v9H10"/></svg>
          <svg width="12" height="12" viewBox="0 0 12 12"><path d="M1 1l10 10M11 1L1 11" stroke="#fff" stroke-width="1.2"/></svg>
        </div>
      </div>

      <div class="toolbar">${TOOLS.map((t) => this.renderTool(t))}</div>

      <div class="main">
        <div class="side">
          <div class="grip"></div>
          <div class="pick">
            <svg width="15" height="19" viewBox="0 0 15 19"><path d="M2 1l11 10H8l3 6-2.5 1-3-6L2 15z" fill="#3d8fc8" stroke="#1d6fa8"/></svg>
          </div>
          ${SIDE_GROUPS.map(
            (g) => html`<hr />${g.map((ic) => html`<div class="st">${ic}</div>`)}`,
          )}
        </div>

        <div class="work">
          <div class="tabs">
            <div class="tab"><span>设计1</span><svg width="10" height="10" viewBox="0 0 10 10"><path d="M1 1l8 8M9 1L1 9" stroke="#fff" stroke-width="2"/></svg></div>
          </div>
          <div class="frame">${this.renderCanvas()}</div>
        </div>

        <div class="panel">
          <div class="libs">
            <span class="name">选择图库:</span>
            <div class="combo">1. 基本图形<i></i></div>
          </div>
          <div class="gallery">
            <div class="cells">
              ${SHAPES.map(
                (s) => html`<div class="cell">
                  <svg width="76" height="76" viewBox="0 0 76 76">${s.s}</svg>
                  ${s.n ? html`<span>${s.n}</span>` : null}
                </div>`,
              )}
            </div>
            <div class="scroll"></div>
          </div>
          <div class="table">
            <div class="head"><div>加工工艺</div><div>速度</div><div>功率</div><div>输出</div></div>
            <div class="rows">
              <div class="cut k">切割</div><div class="sel">40.0</div><div class="sel">99.0</div><div class="sel"><span class="check">${this.tick()}</span></div>
              <div class="cut r">切割</div><div>100.0</div><div>20.0</div><div><span class="check">${this.tick()}</span></div>
              ${Array.from({ length: 20 }, () => html`<div></div>`)}
            </div>
          </div>
          <div class="go">
            <div class="sim">模拟<br />造物</div>
            <div class="start">开始<br />造物</div>
          </div>
        </div>
      </div>

      <div class="colors">
        <div class="dots"></div>
        <div class="sw on"><i></i></div>
        ${SWATCHES.map((c) => html`<div class="sw"><i style="background:${c}"></i></div>`)}
        <div class="sw"><i class="multi"></i></div>
      </div>
      <div class="status">
        <svg width="14" height="14" viewBox="0 0 14 14"><path d="M3.5 0v14M0 10.5h14" stroke="#000" stroke-width="1.3"/></svg>
        <span class="xy">XY(192.63, 48.97)</span>
        <span class="conn">连接方式</span>
        <span class="dot"></span>
        <span>断开</span>
      </div>

      <div class="task">
        <div class="weather">
          <div class="sun"></div>
          <div class="badge">1</div>
          <div class="wtxt">7°C<br /><span>晴朗</span></div>
        </div>
        <div class="bar-left">
          <svg class="win11" viewBox="0 0 24 24"><defs><linearGradient id="w" x1="0" y1="0" x2="1" y2="1"><stop offset="0" stop-color="#4fd0fa"/><stop offset="1" stop-color="#0a6fd6"/></linearGradient></defs><path d="M0 2q0-2 2-2h9.5v11.5H0zM12.5 0H22q2 0 2 2v9.5H12.5zM0 12.5h11.5V24H2q-2 0-2-2zM12.5 12.5H24V22q0 2-2 2h-9.5z" fill="url(#w)"/></svg>
          <div class="search">
            <svg width="15" height="16" viewBox="0 0 15 16" fill="none" stroke="#333" stroke-width="1.5"><circle cx="6.5" cy="6.5" r="5.5"/><path d="M10.5 11l4 4.5"/></svg>
            <em>搜索</em><i></i>
          </div>
          ${CENTER_ICONS.map(
            (t) => html`<div class="ti ${t.dot ? "dot" : ""}" style="margin-left:${t.ml}px;width:${t.w}px">${t.icon}</div>`,
          )}
          <div class="cur">${logo(26)}</div>
        </div>
        <div class="tray">
          <svg width="10" height="6" viewBox="0 0 10 6" fill="none"><path d="M1 5l4-4 4 4" stroke="#222" stroke-width="1.2"/></svg>
          <svg style="margin-left:19px" width="16" height="11" viewBox="0 0 16 11"><path d="M4 11a3.5 3.5 0 0 1-.5-7A5 5 0 0 1 12 3.5a3.5 3.5 0 0 1 0 7.5z" fill="#4a4a4a"/><path d="M2 8.5h12v2.5H3z" fill="#ddd"/></svg>
          <svg style="margin-left:18px" width="17" height="17" viewBox="0 0 17 17" fill="none"><path d="M1 8a7 7 0 0 1 12-5M14 1v3h-3M4 14a7 7 0 0 1-3-3M1 16v-3h3" stroke="#222" stroke-width="1.1"/><circle cx="12.5" cy="12.5" r="4" fill="#f59a0c"/></svg>
          <span class="zh">中</span>
          <svg style="margin-left:18px" width="16" height="13" viewBox="0 0 16 13" fill="none" stroke="#222" stroke-width="1.1"><path d="M.5 4.5c4-4 11-4 15 0M3 7c2.5-2.5 7.5-2.5 10 0M5.5 9.5c1-1 4-1 5 0"/><circle cx="8" cy="11.5" r=".8" fill="#222"/></svg>
          <svg style="margin-left:7px" width="16" height="13" viewBox="0 0 16 13" fill="none" stroke="#222"><path d="M.5 4.5h3l3.5-3v10l-3.5-3h-3zM9.5 4c1 1.5 1 3.5 0 5M12 3c1.5 2 1.5 5 0 7"/></svg>
          <div class="clock">10:18<br />2024/11/12</div>
          <svg class="bell" width="14" height="15" viewBox="0 0 14 15"><path d="M7 0c3 0 4.5 2.5 4.5 5v3l2 3.5H.5l2-3.5V5C2.5 2.5 4 0 7 0zM5 12.5h4a2 2 0 0 1-4 0z" fill="#0f4f9e"/></svg>
        </div>
      </div>
    `;
  }

  private tick() {
    return html`<svg width="10" height="8" viewBox="0 0 10 8" fill="none"><path d="M.5 4l3 3 6-6.5" stroke="#000" stroke-width="1.2"/></svg>`;
  }
}
